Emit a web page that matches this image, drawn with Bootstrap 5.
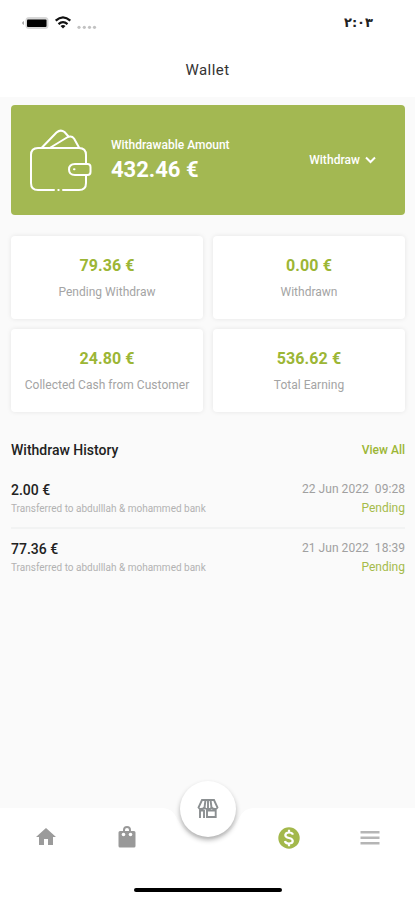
<!DOCTYPE html>
<html lang="en">
<head>
<meta charset="utf-8">
<meta name="viewport" content="width=device-width, initial-scale=1">
<title>Wallet</title>
<link href="https://cdn.jsdelivr.net/npm/bootstrap@5.3.0/dist/css/bootstrap.min.css" rel="stylesheet">
<style>
  :root { --olive: #a3b852; --lime: #9cb635; }
  body { font-family: Roboto, "DejaVu Sans", sans-serif; background: #fafafa; color: #222; height: 900px; overflow: hidden; }
  .status { height: 46px; padding: 0 42px 0 22px; }
  .clock { font: bold 13px/20px "DejaVu Sans", sans-serif; letter-spacing: -.3px; color: #222; }
  .title { height: 51px; font-size: 15px; line-height: 49px; letter-spacing: .45px; color: #333; }
  .main { padding: 8px 10px 0 11px; }
  .banner { height: 110px; background: var(--olive); border-radius: 4px; padding: 0 29px 0 18px; }
  .banner-label { font-size: 12px; font-weight: 500; line-height: 16px; }
  .banner-sum { font-size: 22px; font-weight: 700; line-height: 30px; padding-top: 2px; }
  .banner-copy { margin-left: 19px; padding-top: 2px; }
  .pick { font-size: 12px; font-weight: 500; gap: 5px; letter-spacing: .05px; }
  .stats { gap: 10px; margin-top: 21px; display: grid; grid-template-columns: 192px 192px; }
  .stat { height: 83px; background: #fff; border-radius: 4px; box-shadow: 0 0 5px rgba(0,0,0,.085); padding-top: 19px; }
  .stat-sum { font-size: 16px; font-weight: 700; line-height: 21px; letter-spacing: .1px; color: var(--lime); }
  .stat-label { font-size: 12px; line-height: 16px; margin-top: 8px; color: #a4a4a4; letter-spacing: .02px; }
  .history-head { margin-top: 28px; height: 20px; font-size: 14px; font-weight: 500; letter-spacing: 0; }
  .all { font-size: 12px; color: var(--lime); }
  .entry { height: 57px; padding-top: 10px; }
  .entry + .entry { border-top: 2px solid #f2f3f3; }
  .history { margin-top: 10px; }
  .sum { font-size: 14px; font-weight: 500; line-height: 20px; }
  .memo { font-size: 10px; line-height: 16px; padding-top: 1px; color: #b2b2b2; }
  .when { font-size: 12px; line-height: 18px; color: #a0a0a0; white-space: pre; letter-spacing: .05px; }
  .state { font-size: 12px; line-height: 18px; margin-top: 1px; color: #a5bb4b; }
  .tabs { height: 92px; }
  .tabs-shape { position: absolute; left: 0; top: 0; }
  .tabs-row { position: relative; display: grid; grid-template-columns: 92px 70px 92px 70px 91px; height: 58px; }
  .shop { position: absolute; left: 180px; top: -27px; width: 56px; height: 56px; background: #fff; box-shadow: 0 3px 5px rgba(0,0,0,.3); }
  .home-bar { width: 148px; height: 4px; background: #000; border-radius: 2px; margin-top: 22px; }
</style>
<script src="https://cdn.jsdelivr.net/npm/bootstrap@5.3.0/dist/js/bootstrap.bundle.min.js"></script>
</head>
<body class="d-flex flex-column">
<header class="bg-white">
  <div class="status d-flex align-items-center justify-content-between">
    <svg width="78" height="20" viewBox="0 0 78 20">
      <path d="M2 8v4Q0 11 0 10T2 8Z" fill="#aaa"/>
      <rect x="3.500" y="4" width="23" height="12" rx="3.500" fill="#d7d7d7"/>
      <rect x="5" y="6.500" width="19.500" height="7.500" rx="1" fill="#000"/>
      <g fill="none" stroke="#111" stroke-width="2.200"><path d="M33.700 7.600Q41 1.200 48.300 7.600M36.500 11.100Q41 7.200 45.500 11.100"/></g>
      <path d="M38.500 13Q41 11.200 43.500 13L41 15.500Z" fill="#111"/>
      <g fill="#c2c2c2"><circle cx="57" cy="14.300" r="1.600"/><circle cx="62.300" cy="14.300" r="1.600"/><circle cx="67.500" cy="14.300" r="1.600"/><circle cx="72.500" cy="14.300" r="1.600"/></g>
    </svg>
    <span class="clock">٢:٠٣</span>
  </div>
  <div class="title text-center">Wallet</div>
</header>
<main class="main flex-grow-1">
  <section class="banner d-flex align-items-center text-white">
    <svg width="63" height="64" viewBox="0 0 63 64" fill="none" stroke="#fff" stroke-width="2" stroke-linecap="round" stroke-linejoin="round">
      <path d="M25 62H9Q2 62 2 55V27Q2 20 9 20H50Q57 20 57 27V35M57 48V55Q57 62 50 62H34M29.300 62h.4"/>
      <path d="M46 36H58.500Q61.500 36 61.500 39V44Q61.500 47 58.500 47H46Q40 47 40 41.500T46 36Z"/><path d="M45 41.300h.5"/>
      <path d="M13 19.500L27.500 4.500Q31.500 1 35.500 4L39.500 8.500M21.500 19.500L38 9.500Q42.500 7 45 10.500L50 19.500"/>
    </svg>
    <div class="banner-copy">
      <div class="banner-label">Withdrawable Amount</div>
      <div class="banner-sum">432.46 €</div>
    </div>
    <div class="pick ms-auto d-flex align-items-center"><span>Withdraw</span><svg width="11" height="8" viewBox="0 0 11 8" fill="none" stroke="#fff" stroke-width="2"><path d="M1 1.500l4.500 4.500L10 1.500"/></svg></div>
  </section>
  <section class="stats text-center">
    <div class="stat"><div class="stat-sum">79.36 €</div><div class="stat-label">Pending Withdraw</div></div>
    <div class="stat"><div class="stat-sum">0.00 €</div><div class="stat-label">Withdrawn</div></div>
    <div class="stat"><div class="stat-sum">24.80 €</div><div class="stat-label">Collected Cash from Customer</div></div>
    <div class="stat"><div class="stat-sum">536.62 €</div><div class="stat-label">Total Earning</div></div>
  </section>
  <div class="history-head d-flex align-items-center justify-content-between"><span>Withdraw History</span><span class="all">View All</span></div>
  <section class="history">
    <div class="entry d-flex justify-content-between">
      <div><div class="sum">2.00 €</div><div class="memo">Transferred to abdulllah &amp; mohammed bank</div></div>
      <div class="text-end"><div class="when">22 Jun 2022  09:28</div><div class="state">Pending</div></div>
    </div>
    <div class="entry d-flex justify-content-between">
      <div><div class="sum">77.36 €</div><div class="memo">Transferred to abdulllah &amp; mohammed bank</div></div>
      <div class="text-end"><div class="when">21 Jun 2022  18:39</div><div class="state">Pending</div></div>
    </div>
  </section>
</main>
<nav class="tabs position-relative">
  <svg class="tabs-shape" width="415" height="92" viewBox="0 0 415 92"><path d="M0 0H161C173 0 175 7 179 14A33 33 0 0 0 237 14C241 7 243 0 255 0H415V92H0Z" fill="#fff"/></svg>
  <div class="tabs-row align-items-center text-center">
    <span><svg width="24" height="24" viewBox="0 0 24 24" fill="#9b9b9b"><path d="M10 20v-6h4v6h5v-8h3L12 3 2 12h3v8z"/></svg></span>
    <span><svg width="20" height="24" viewBox="0 0 20 24"><path d="M6 6V5a4 4 0 0 1 8 0v1h3q1.500 0 1.500 1.500V21q0 1.500-1.500 1.500H3q-1.500 0-1.500-1.500V7.500Q1.500 6 3 6Z" fill="#999"/><path d="M8 6V5a2 2 0 0 1 4 0v1Z" fill="#fff"/><circle cx="6.500" cy="9.500" r="1.800" fill="#fff"/><circle cx="13.500" cy="9.500" r="1.800" fill="#fff"/></svg></span>
    <span></span>
    <span><svg width="22" height="22" viewBox="0 0 22 22"><circle cx="11" cy="11" r="10.700" fill="#a3b84b"/><path d="M15 7.700Q14.300 5.500 11 5.500T7.300 8Q7.300 10.200 11 11T14.800 14Q14.700 16.500 11 16.500T7 14M11 2.800V5.500M11 16.500V19.200" fill="none" stroke="#fff" stroke-width="2.200"/></svg></span>
    <span><svg width="20" height="16" viewBox="0 0 20 16" fill="#b5b5b5"><path d="M.5 1h19v2.500H.5zM.5 6.500h19V9H.5zM.5 12h19v2.500H.5z"/></svg></span>
  </div>
  <div class="shop rounded-circle d-flex align-items-center justify-content-center">
    <svg width="22" height="22" viewBox="0 0 22 22" fill="none" stroke="#8b8f91" stroke-width="1.900"><path d="M5 2H17L20.500 9.500Q20 11 18 11T14.500 9.500Q14 11 11 11T7.500 9.500Q6 11 4 11T1.500 9.500ZM7.500 9.500L8.500 2M14.500 9.500L13.500 2M11 2V10M3 11V20M3 12.500H7V20M10 12.500H18.700V19H10Z"/></svg>
  </div>
  <div class="home-bar mx-auto position-relative"></div>
</nav>
</body>
</html>
